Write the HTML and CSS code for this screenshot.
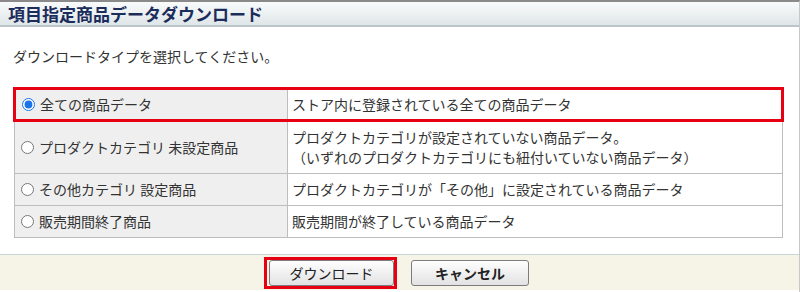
FILE: index.html
```html
<!DOCTYPE html>
<html lang="ja">
<head>
    <meta charset="UTF-8">
    <title>項目指定商品データダウンロード</title>
    <link rel="stylesheet" href="styles.css">
</head>
<body>
    <div class="panel">
        <div class="panel-head">
            <h1 class="title">項目指定商品データダウンロード</h1>
        </div>
        <div class="panel-body">
            <p class="lead">ダウンロードタイプを選択してください。</p>
            <table class="types">
                <tr class="selected">
                    <td class="type-name"><label><input type="radio" name="type" checked>全ての商品データ</label></td>
                    <td class="type-desc">ストア内に登録されている全ての商品データ</td>
                </tr>
                <tr>
                    <td class="type-name"><label><input type="radio" name="type">プロダクトカテゴリ 未設定商品</label></td>
                    <td class="type-desc">プロダクトカテゴリが設定されていない商品データ。<br>（いずれのプロダクトカテゴリにも紐付いていない商品データ）</td>
                </tr>
                <tr>
                    <td class="type-name"><label><input type="radio" name="type">その他カテゴリ 設定商品</label></td>
                    <td class="type-desc">プロダクトカテゴリが「その他」に設定されている商品データ</td>
                </tr>
                <tr>
                    <td class="type-name"><label><input type="radio" name="type">販売期間終了商品</label></td>
                    <td class="type-desc">販売期間が終了している商品データ</td>
                </tr>
            </table>
        </div>
        <div class="panel-foot">
            <span class="mark"><button class="btn">ダウンロード</button></span>
            <button class="btn btn-bold">キャンセル</button>
        </div>
    </div>
</body>
</html>
```

FILE: styles.css
```css
* {
    margin: 0;
    padding: 0;
    box-sizing: border-box;
}
body {
    background: #fff;
    font-family: "Noto Sans CJK JP", "Noto Sans", sans-serif;
    color: #333;
    font-size: 14px;
}
.panel {
    width: 800px;
    height: 292px;
    border-top: 2px solid #8a8a8a;
    border-right: 1px solid #c8c8c8;
    overflow: hidden;
}
.panel-head {
    height: 25px;
    background: linear-gradient(#f9fbfb, #dfe6e8);
    border-bottom: 2px solid #bcc5ca;
    padding-left: 8px;
}
.title {
    font-size: 17px;
    line-height: 24px;
    font-weight: bold;
    color: #1c2d5c;
}
.panel-body {
    height: 227px;
    padding: 18px 15px 0 13px;
}
.lead {
    line-height: 22px;
    margin-bottom: 20px;
}
.types {
    width: 771px;
    border-collapse: collapse;
}
.types td {
    border: 1px solid #bdbdbd;
    line-height: 20px;
    padding: 5px 4px 6px;
    vertical-align: middle;
}
.type-name {
    width: 273px;
    background: #efefef;
    padding-left: 6px !important;
}
.type-name label {
    display: flex;
    align-items: center;
}
.type-name input {
    width: 13px;
    height: 13px;
    margin: 0 5px 0 0;
    accent-color: #1a73e8;
}
.type-desc {
    background: #fff;
}
.types tr.selected td {
    border-top: 3px solid #e60012;
    border-bottom: 3px solid #e60012;
    padding: 4px 4px 5px;
}
.types tr.selected td:first-child {
    border-left: 3px solid #e60012;
}
.types tr.selected td:last-child {
    border-right: 3px solid #e60012;
}
.panel-foot {
    height: 36px;
    background: #f6f4e7;
    border-top: 1px solid #c9d3da;
    display: flex;
    justify-content: center;
    align-items: flex-start;
    gap: 14px;
    padding-top: 2px;
    padding-right: 6px;
}
.mark {
    display: block;
    border: 3px solid #e60012;
    padding: 0 0 0 2px;
}
.btn {
    display: block;
    width: 125px;
    height: 26px;
    margin: 0;
    border: 1px solid #7c7c7c;
    border-radius: 3px;
    background: linear-gradient(#fefefe, #e2e2e2);
    font-family: "Noto Sans CJK JP", sans-serif;
    font-size: 14px;
    color: #222;
}
.btn-bold {
    width: 118px;
    margin-top: 3px;
    font-weight: bold;
}
```
